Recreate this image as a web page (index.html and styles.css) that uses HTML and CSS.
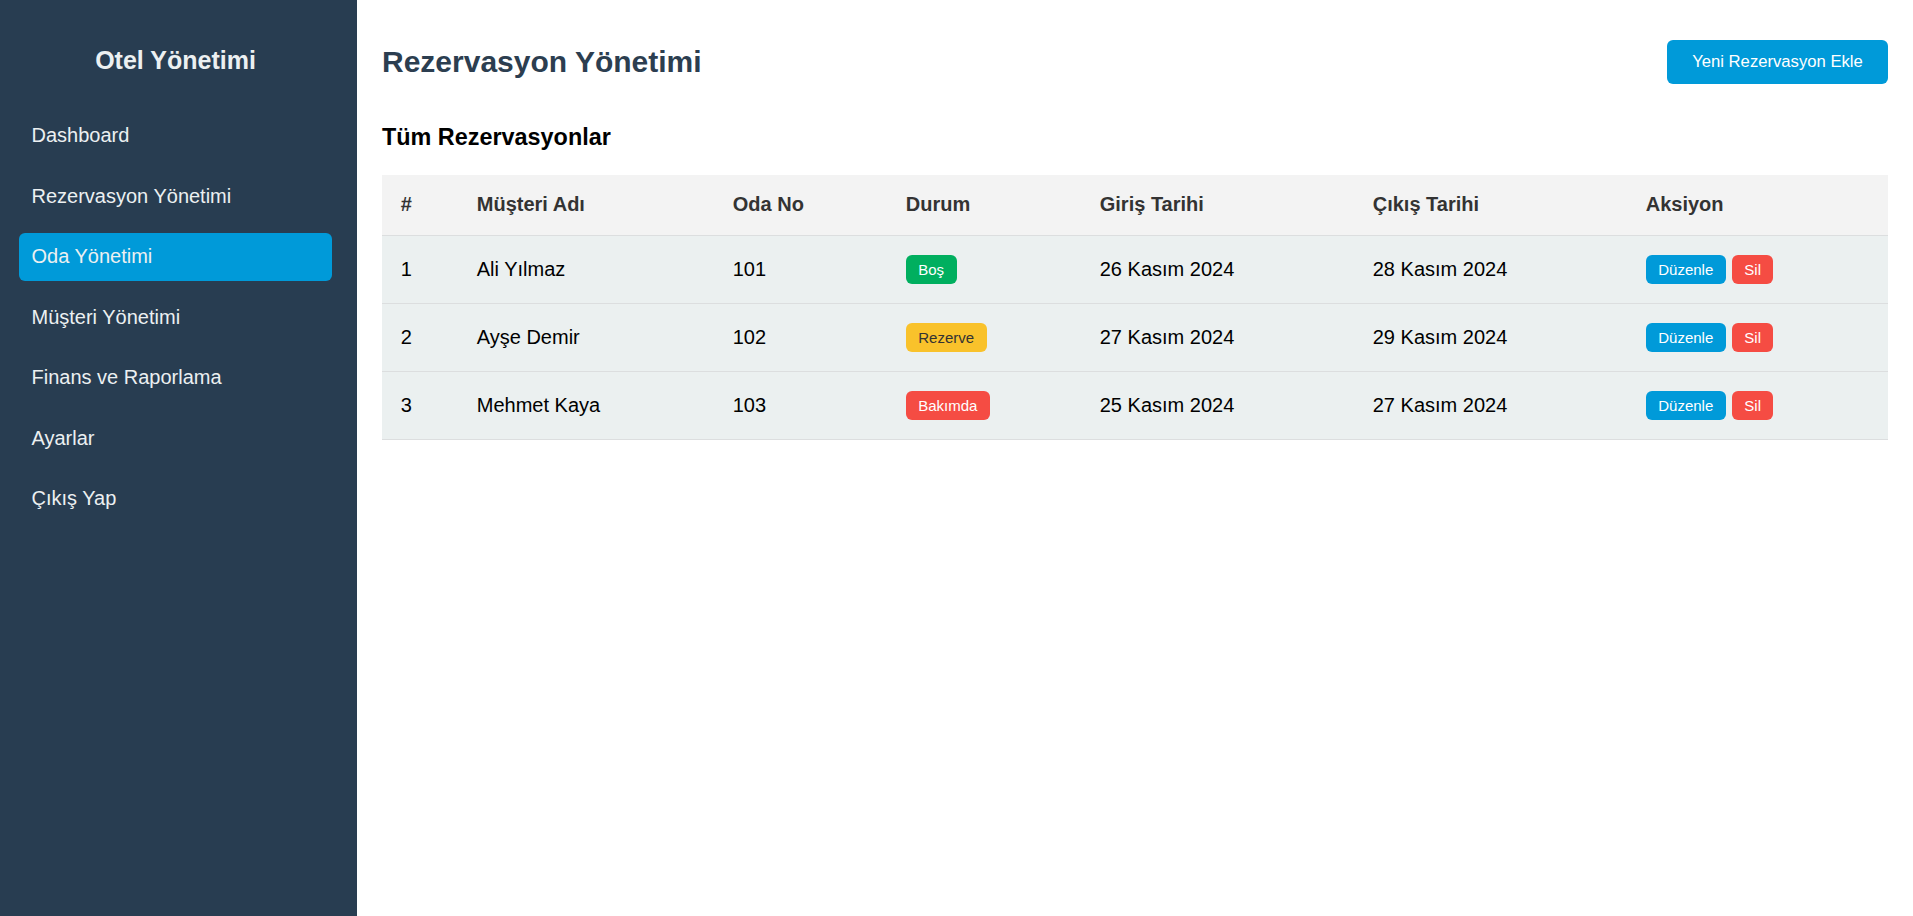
FILE: index.html
```html
<!DOCTYPE html>
<html lang="tr">
<head>
<meta charset="utf-8">
<title>Otel Yönetimi</title>
<link rel="stylesheet" href="styles.css">
</head>
<body>
<div class="layout">
  <aside class="sidebar">
    <h2 class="brand">Otel Yönetimi</h2>
    <nav class="nav">
      <a class="nav-item" href="#">Dashboard</a>
      <a class="nav-item" href="#">Rezervasyon Yönetimi</a>
      <a class="nav-item active" href="#">Oda Yönetimi</a>
      <a class="nav-item" href="#">Müşteri Yönetimi</a>
      <a class="nav-item" href="#">Finans ve Raporlama</a>
      <a class="nav-item" href="#">Ayarlar</a>
      <a class="nav-item" href="#">Çıkış Yap</a>
    </nav>
  </aside>
  <main class="main">
    <header class="page-header">
      <h1 class="page-title">Rezervasyon Yönetimi</h1>
      <button class="btn-primary">Yeni Rezervasyon Ekle</button>
    </header>
    <h3 class="section-title">Tüm Rezervasyonlar</h3>
    <table class="table">
      <thead>
        <tr>
          <th class="c-no">#</th>
          <th class="c-name">Müşteri Adı</th>
          <th class="c-room">Oda No</th>
          <th class="c-status">Durum</th>
          <th class="c-in">Giriş Tarihi</th>
          <th class="c-out">Çıkış Tarihi</th>
          <th class="c-act">Aksiyon</th>
        </tr>
      </thead>
      <tbody>
        <tr>
          <td>1</td>
          <td>Ali Yılmaz</td>
          <td>101</td>
          <td><span class="badge badge-green">Boş</span></td>
          <td>26 Kasım 2024</td>
          <td>28 Kasım 2024</td>
          <td><div class="actions"><button class="btn-sm btn-edit">Düzenle</button><button class="btn-sm btn-del">Sil</button></div></td>
        </tr>
        <tr>
          <td>2</td>
          <td>Ayşe Demir</td>
          <td>102</td>
          <td><span class="badge badge-yellow">Rezerve</span></td>
          <td>27 Kasım 2024</td>
          <td>29 Kasım 2024</td>
          <td><div class="actions"><button class="btn-sm btn-edit">Düzenle</button><button class="btn-sm btn-del">Sil</button></div></td>
        </tr>
        <tr>
          <td>3</td>
          <td>Mehmet Kaya</td>
          <td>103</td>
          <td><span class="badge badge-red">Bakımda</span></td>
          <td>25 Kasım 2024</td>
          <td>27 Kasım 2024</td>
          <td><div class="actions"><button class="btn-sm btn-edit">Düzenle</button><button class="btn-sm btn-del">Sil</button></div></td>
        </tr>
      </tbody>
    </table>
  </main>
</div>
</body>
</html>
```
FILE: styles.css
```css
* { box-sizing: border-box; }
html, body { margin: 0; padding: 0; }
body {
  font-family: "Liberation Sans", Arial, sans-serif;
  font-size: 20px;
  color: #000;
  background: #fff;
}
.layout {
  display: flex;
  min-height: 100vh;
}
.sidebar {
  width: 357px;
  flex: 0 0 357px;
  background: #283d51;
  color: #ecf0f1;
  padding: 46px 25px 20px 19px;
}
.brand {
  margin: 0 0 37px;
  font-size: 25px;
  font-weight: bold;
  text-align: center;
  color: #ecf0f1;
  line-height: 28.75px;
}
.nav {
  display: flex;
  flex-direction: column;
  gap: 12.5px;
}
.nav-item {
  display: block;
  padding: 12.5px 12.5px;
  line-height: 23px;
  color: #ecf0f1;
  text-decoration: none;
  border-radius: 6px;
}
.nav-item.active {
  background: #009ad9;
}
.main {
  flex: 1;
  padding: 40px 25px 25px 25px;
}
.page-header {
  display: flex;
  justify-content: space-between;
  align-items: center;
}
.page-title {
  margin: 0;
  font-size: 30px;
  font-weight: bold;
  color: #2c3e50;
  line-height: 34.5px;
}
.btn-primary {
  font-family: "Liberation Sans", Arial, sans-serif;
  font-size: 16.67px;
  color: #fff;
  background: #009ad9;
  border: none;
  border-radius: 6px;
  padding: 0 25px;
  height: 44px;
  width: 221px;
}
.section-title {
  margin: 40px 0 23.5px;
  font-size: 23.4px;
  font-weight: bold;
  line-height: 27px;
}
.table {
  width: 100%;
  border-collapse: collapse;
  table-layout: fixed;
}
.table th, .table td {
  padding: 18.75px;
  text-align: left;
  vertical-align: middle;
  border-bottom: 1px solid #dcdedf;
  line-height: 23px;
}
.table th {
  background: #f3f3f3;
  color: #333;
  font-weight: bold;
}
.table td {
  background: #ebf0f0;
  height: 68px;
}
.c-no { width: 76px; }
.c-name { width: 256px; }
.c-room { width: 173px; }
.c-status { width: 194px; }
.c-in { width: 273px; }
.c-out { width: 273px; }
.c-act { width: 261px; }
.badge {
  display: inline-block;
  font-size: 15px;
  line-height: 17px;
  padding: 6px 12.5px;
  border-radius: 6px;
  color: #fff;
  vertical-align: middle;
}
.badge-green { background: #00af5f; }
.badge-yellow { background: #f9c22b; color: #333; }
.badge-red { background: #f54c43; }
.actions {
  display: flex;
  gap: 6px;
  align-items: center;
}
.btn-sm {
  font-family: "Liberation Sans", Arial, sans-serif;
  font-size: 15px;
  line-height: 17px;
  padding: 6px 12.5px;
  border: none;
  border-radius: 6px;
  color: #fff;
}
.btn-edit { background: #009ad9; }
.btn-del { background: #f54c43; }
```
